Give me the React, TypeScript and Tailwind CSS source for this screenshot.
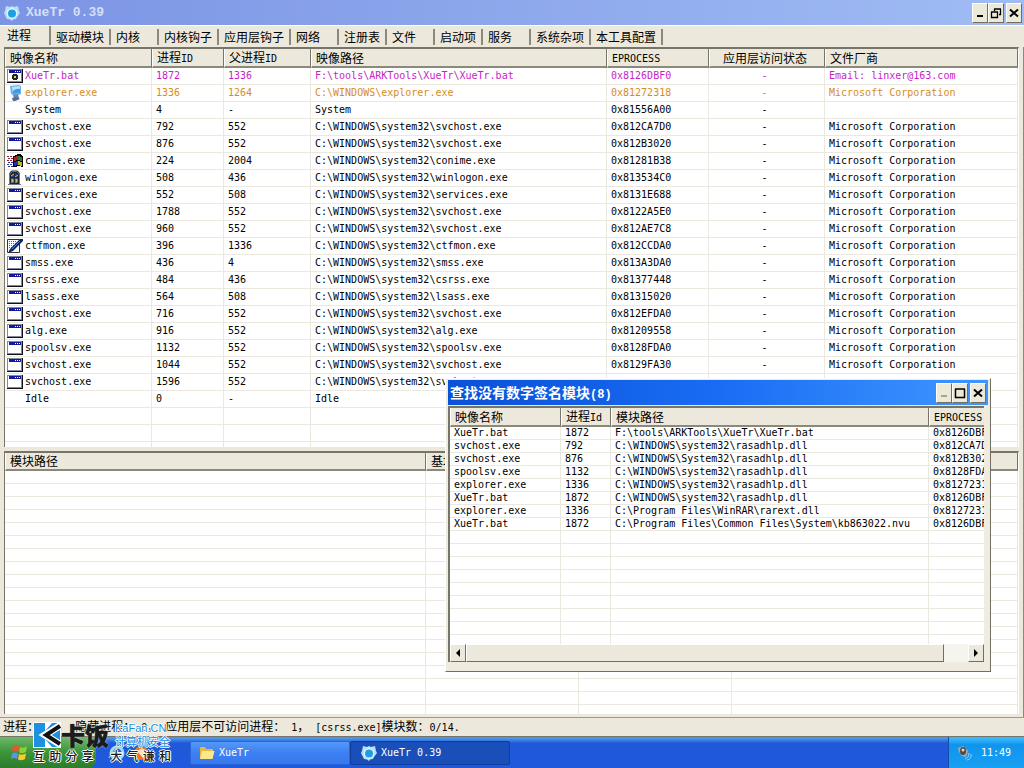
import React from 'react';

type IconName = 'console' | 'bat' | 'explorer' | 'flag' | 'winlogon' | 'ctfmon' | 'none';

interface ProcessRow {
  icon: IconName;
  name: string;
  pid: string;
  parent: string;
  path: string;
  eprocess: string;
  vendor: string;
  color?: string;
}

const MS = 'Microsoft Corporation';
const SYS = 'C:\\WINDOWS\\system32\\';

const processes: ProcessRow[] = [
  { icon: 'bat', name: 'XueTr.bat', pid: '1872', parent: '1336', path: 'F:\\tools\\ARKTools\\XueTr\\XueTr.bat', eprocess: '0x8126DBF0', vendor: 'Email: linxer@163.com', color: 'text-[#c81ec8]' },
  { icon: 'explorer', name: 'explorer.exe', pid: '1336', parent: '1264', path: 'C:\\WINDOWS\\explorer.exe', eprocess: '0x81272318', vendor: MS, color: 'text-[#d88c18]' },
  { icon: 'none', name: 'System', pid: '4', parent: '-', path: 'System', eprocess: '0x81556A00', vendor: '' },
  { icon: 'console', name: 'svchost.exe', pid: '792', parent: '552', path: SYS + 'svchost.exe', eprocess: '0x812CA7D0', vendor: MS },
  { icon: 'console', name: 'svchost.exe', pid: '876', parent: '552', path: SYS + 'svchost.exe', eprocess: '0x812B3020', vendor: MS },
  { icon: 'flag', name: 'conime.exe', pid: '224', parent: '2004', path: SYS + 'conime.exe', eprocess: '0x81281B38', vendor: MS },
  { icon: 'winlogon', name: 'winlogon.exe', pid: '508', parent: '436', path: SYS + 'winlogon.exe', eprocess: '0x813534C0', vendor: MS },
  { icon: 'console', name: 'services.exe', pid: '552', parent: '508', path: SYS + 'services.exe', eprocess: '0x8131E688', vendor: MS },
  { icon: 'console', name: 'svchost.exe', pid: '1788', parent: '552', path: SYS + 'svchost.exe', eprocess: '0x8122A5E0', vendor: MS },
  { icon: 'console', name: 'svchost.exe', pid: '960', parent: '552', path: SYS + 'svchost.exe', eprocess: '0x812AE7C8', vendor: MS },
  { icon: 'ctfmon', name: 'ctfmon.exe', pid: '396', parent: '1336', path: SYS + 'ctfmon.exe', eprocess: '0x812CCDA0', vendor: MS },
  { icon: 'console', name: 'smss.exe', pid: '436', parent: '4', path: SYS + 'smss.exe', eprocess: '0x813A3DA0', vendor: MS },
  { icon: 'console', name: 'csrss.exe', pid: '484', parent: '436', path: SYS + 'csrss.exe', eprocess: '0x81377448', vendor: MS },
  { icon: 'console', name: 'lsass.exe', pid: '564', parent: '508', path: SYS + 'lsass.exe', eprocess: '0x81315020', vendor: MS },
  { icon: 'console', name: 'svchost.exe', pid: '716', parent: '552', path: SYS + 'svchost.exe', eprocess: '0x812EFDA0', vendor: MS },
  { icon: 'console', name: 'alg.exe', pid: '916', parent: '552', path: SYS + 'alg.exe', eprocess: '0x81209558', vendor: MS },
  { icon: 'console', name: 'spoolsv.exe', pid: '1132', parent: '552', path: SYS + 'spoolsv.exe', eprocess: '0x8128FDA0', vendor: MS },
  { icon: 'console', name: 'svchost.exe', pid: '1044', parent: '552', path: SYS + 'svchost.exe', eprocess: '0x8129FA30', vendor: MS },
  { icon: 'console', name: 'svchost.exe', pid: '1596', parent: '552', path: SYS + 'svchost.exe', eprocess: '', vendor: '' },
  { icon: 'none', name: 'Idle', pid: '0', parent: '-', path: 'Idle', eprocess: '', vendor: '' },
];

const unsigned = [
  ['XueTr.bat', '1872', 'F:\\tools\\ARKTools\\XueTr\\XueTr.bat', '0x8126DBF0'],
  ['svchost.exe', '792', 'C:\\WINDOWS\\system32\\rasadhlp.dll', '0x812CA7D0'],
  ['svchost.exe', '876', 'C:\\WINDOWS\\System32\\rasadhlp.dll', '0x812B3020'],
  ['spoolsv.exe', '1132', 'C:\\WINDOWS\\system32\\rasadhlp.dll', '0x8128FDA0'],
  ['explorer.exe', '1336', 'C:\\WINDOWS\\system32\\rasadhlp.dll', '0x81272318'],
  ['XueTr.bat', '1872', 'C:\\WINDOWS\\system32\\rasadhlp.dll', '0x8126DBF0'],
  ['explorer.exe', '1336', 'C:\\Program Files\\WinRAR\\rarext.dll', '0x81272318'],
  ['XueTr.bat', '1872', 'C:\\Program Files\\Common Files\\System\\kb863022.nvu', '0x8126DBF0'],
];

const tabs = ['驱动模块', '内核', '内核钩子', '应用层钩子', '网络', '注册表', '文件', '启动项', '服务', '系统杂项', '本工具配置'];

const blank = (n: number) => Array.from({ length: n }, (_, i) => i);

// Latin runs are set in a half-width face, so two letters take the room of one ideograph.
const Mixed: React.FC<{ text: string }> = ({ text }) => (
  <>
    {text.split(/([\x20-\x7e]+)/).map((part, i) =>
      i % 2 ? (
        <span key={i} className="font-['DejaVu_Sans_Mono',monospace] text-[10px] whitespace-pre">{part}</span>
      ) : (
        part
      )
    )}
  </>
);

const RowIcon: React.FC<{ name: IconName }> = ({ name }) => {
  const svg = 'block w-4 h-4 shrink-0';
  if (name === 'none') return <span className={svg}></span>;
  if (name === 'flag') {
    return (
      <svg className={svg} viewBox="0 0 16 16" shapeRendering="crispEdges">
        <path d="M6 3h2V2h2V1h4v1h1v1h1v11h-2v-1h-4v1H6z" fill="#000" />
        <path d="M7 4h2V3h2v4H9v1H7z" fill="#b02020" />
        <path d="M11 3h2v1h2v4h-2V7h-2z" fill="#208030" />
        <path d="M7 9h2V8h2v4H9v1H7z" fill="#2030b0" />
        <path d="M11 8h2v1h2v4h-2v-1h-2z" fill="#c8b020" />
        <path d="M0 3h2v1H0zM3 3h2v1H3zM1 5h2v1H1zM4 5h2v1H4zM0 7h2v1H0zM3 7h2v1H3z" fill="#a02040" />
        <path d="M1 9h2v1H1zM4 9h2v1H4zM0 11h2v1H0zM3 11h2v1H3zM1 13h2v1H1zM4 13h2v1H4z" fill="#303090" />
      </svg>
    );
  }
  if (name === 'winlogon') {
    return (
      <svg className={svg} viewBox="0 0 16 16">
        <path d="M2 15V5q0-3 3-4.500h5q3 1.500 3 4.500v10z" fill="#20242c" />
        <path d="M4 6q0-2 3-3v4H4zM8 3q3 1 3 3v1H8zM4 8h3v5H4zM8 8h3v5H8z" fill="#283c90" />
        <path d="M4 6l3-2M8 7l3-2M5 13V9l1 3V9M9 13V9l1 3V9" stroke="#c8c060" fill="none" />
        <path d="M2.500 14V5q0-2 3-3.500h4q3 1.500 3 3.500v9" stroke="#707888" fill="none" />
        <path d="M1 14h13v1H1z" fill="#707888" />
      </svg>
    );
  }
  if (name === 'ctfmon') {
    return (
      <svg className={svg} viewBox="0 0 16 16">
        <path d="M.5 1.500h12v13H.5z" fill="#fff" stroke="#333" />
        <path d="M2 3.500h8M2 5.500h7M2 7.500h5M2 9.500h3" stroke="#666" strokeDasharray="1 1" />
        <path d="M1 15l2-4L13 1h3v2L6 13z" fill="#102468" />
        <path d="M5 11l8-8" stroke="#4c80d8" />
      </svg>
    );
  }
  if (name === 'explorer') {
    return (
      <svg className={svg} viewBox="0 0 16 16">
        <path d="M3 1l9-1 2 1v8l-6 2-4-2z" fill="#6cb0e8" />
        <path d="M5 2l8-1v7l-7 1z" fill="#b4e6fc" />
        <path d="M6 6q3-3 7-2v4l-7 1z" fill="#3c9ce4" />
        <path d="M6 10l5-1 1 4-5 1z" fill="#6c84b0" />
        <path d="M5 13l5-1 3 2-5 2H6z" fill="#586c90" />
      </svg>
    );
  }
  return (
    <svg className={svg} viewBox="0 0 16 16" shapeRendering="crispEdges">
      <path d="M0 1h16v14H0z" fill="#10101c" />
      <path d="M0 1h15v13H0z" fill="#84889c" />
      <path d="M1 2h13v11H1z" fill="#fff" />
      <path d="M2 2h12v3H2z" fill="#10189c" />
      <path d="M8 3h1v1H8zM10 3h1v1h-1zM12 3h1v1h-1z" fill="#fff" />
      {name === 'bat' && (
        <g>
          <path d="M6 6h4v1h1v4h-1v1H6v-1H5V7h1z" fill="#222" />
          <path d="M7 8h2v2H7z" fill="#c8e040" />
        </g>
      )}
    </svg>
  );
};

const GearLogo: React.FC = () => (
  <svg className="block w-4 h-4 shrink-0" viewBox="0 0 16 16">
    <path d="M2 1l4 1 2-1 2 1 4-1 1 5 1 2-3 4-1 2-3 .5L8 16l-2-1.500L3 14l-1-2-2-4 1-2z" fill="#b8e0fa" />
    <path d="M8 2.500l5 3v5.500l-5 3-5-3V5.500z" fill="#e0f6ff" />
    <circle cx="8" cy="8.500" r="4" fill="#1e9ee4" />
  </svg>
);

const CaptionButton: React.FC<{ kind: 'min' | 'restore' | 'max' | 'close'; dim?: boolean }> = ({ kind, dim }) => (
  <button
    aria-label={kind}
    className={`flex w-4 h-5 items-center justify-center bg-[#ece9d8] border border-t-white border-l-white border-r-[#716f64] border-b-[#716f64] ${dim ? 'text-[#a8a590]' : 'text-black'}`}
  >
    <svg className="block w-3 h-3 shrink-0" viewBox="0 0 12 12" fill="none" stroke="currentColor">
      {kind === 'min' && <path d="M3 9h6" strokeWidth="2" />}
      {kind === 'restore' && <path d="M4 2h7M4.500 2v2M10.500 2v5.500H9M1 5h7M1.500 5v5.500h6V5" strokeWidth="1.300" />}
      {kind === 'max' && <path d="M1 2h10M1.500 2v8.500h9V2" strokeWidth="1.500" />}
      {kind === 'close' && <path d="M2 2.500l8 7M10 2.500l-8 7" strokeWidth="2" />}
    </svg>
  </button>
);

const Th: React.FC<{ text: string; center?: boolean }> = ({ text, center }) => (
  <th
    className={`h-[18px] p-0 bg-[#ece9dc] border-l border-r border-b-2 border-l-white border-r-[#77756a] border-b-[#8b897c] font-normal leading-[15px] whitespace-nowrap overflow-hidden ${center ? 'text-center pr-1' : 'text-left pl-1'}`}
  >
    <Mixed text={text} />
  </th>
);

const cell = 'p-0 pl-1 border-r border-b border-[#ebe9df] whitespace-pre overflow-hidden';
const mono = "font-['DejaVu_Sans_Mono',monospace] text-[10px]";
const listFrame = 'bg-white border-t-2 border-l border-r border-t-[#77756a] border-l-[#77756a] border-r-white overflow-hidden';

const ProcessList: React.FC = () => (
  <div className={`${listFrame} grow-[400] basis-0 min-h-0 mx-1`}>
    <table className="w-full table-fixed border-separate border-spacing-0">
      <colgroup>
        <col className="w-[147px]" />
        <col className="w-[72px]" />
        <col className="w-[87px]" />
        <col className="w-[296px]" />
        <col className="w-[102px]" />
        <col className="w-[116px]" />
        <col />
      </colgroup>
      <thead>
        <tr>
          <Th text="映像名称" />
          <Th text="进程ID" />
          <Th text="父进程ID" />
          <Th text="映像路径" />
          <Th text="EPROCESS" />
          <Th text="应用层访问状态" center />
          <Th text="文件厂商" />
        </tr>
      </thead>
      <tbody className={`${mono} leading-4`}>
        {processes.map((p) => (
          <tr key={p.pid} className={p.color ?? 'text-black'}>
            <td className="p-0 pl-0.5 border-r border-b border-[#ebe9df]">
              <div className="flex gap-0.5 h-4">
                <RowIcon name={p.icon} />
                <span>{p.name}</span>
              </div>
            </td>
            <td className={cell}>{p.pid}</td>
            <td className={cell}>{p.parent}</td>
            <td className={cell}>{p.path}</td>
            <td className={cell}>{p.eprocess}</td>
            <td className="p-0 pr-1 border-r border-b border-[#ebe9df] text-center">-</td>
            <td className={cell}>{p.vendor}</td>
          </tr>
        ))}
        {blank(3).map((i) => (
          <tr key={i} className="h-[17px]">
            {blank(7).map((c) => (
              <td key={c} className={cell}></td>
            ))}
          </tr>
        ))}
      </tbody>
    </table>
  </div>
);

const ModuleList: React.FC = () => (
  <div className={`${listFrame} grow-[263] basis-0 min-h-0 mx-1`}>
    <table className="w-full table-fixed border-separate border-spacing-0">
      <colgroup>
        <col className="w-[421px]" />
        <col className="w-[153px]" />
        <col className="w-[153px]" />
        <col />
      </colgroup>
      <thead>
        <tr>
          <Th text="模块路径" />
          <Th text="基址" />
          <Th text="大小" />
          <Th text="文件厂商" />
        </tr>
      </thead>
      <tbody>
        {blank(20).map((i) => (
          <tr key={i} className="h-[13px]">
            {blank(4).map((c) => (
              <td key={c} className={cell}></td>
            ))}
          </tr>
        ))}
      </tbody>
    </table>
  </div>
);

const scrollButton = 'flex w-4 items-center justify-center bg-[#ece9dc] border border-t-white border-l-white border-r-[#716f64] border-b-[#716f64]';

const UnsignedDialog: React.FC = () => (
  <section
    role="dialog"
    aria-label="查找没有数字签名模块"
    className="absolute left-[445px] top-[378px] w-[546px] h-[294px] flex flex-col gap-px bg-[#efecdf] border border-l-white border-t-white border-r-[#716f64] border-b-[#716f64] px-0.5 pt-px pb-[9px]"
  >
    <div className="flex items-center h-[25px] shrink-0 px-0.5 bg-linear-to-r from-[#0a50d8] via-[#1a6cf4] to-[#3f96ff] text-white">
      <h2 className="flex-1 font-bold text-sm whitespace-nowrap">
        查找没有数字签名模块<span className="font-['Liberation_Mono',monospace] text-xs">(8)</span>
      </h2>
      <CaptionButton kind="min" dim />
      <CaptionButton kind="max" />
      <span className="w-0.5"></span>
      <CaptionButton kind="close" />
    </div>
    <div className="flex-1 min-h-0 flex flex-col mr-1 bg-white border-t-2 border-l-2 border-[#77756a]">
      <div className="flex-1 min-h-0 overflow-hidden">
        <table className="w-[557px] table-fixed border-separate border-spacing-0">
          <colgroup>
            <col className="w-[111px]" />
            <col className="w-[50px]" />
            <col className="w-[318px]" />
            <col className="w-[78px]" />
          </colgroup>
          <thead>
            <tr>
              <Th text="映像名称" />
              <Th text="进程Id" />
              <Th text="模块路径" />
              <Th text="EPROCESS" />
            </tr>
          </thead>
          <tbody className={`${mono} leading-3`}>
            {unsigned.map((row, i) => (
              <tr key={i}>
                {row.map((value, c) => (
                  <td key={c} className={cell}>{value}</td>
                ))}
              </tr>
            ))}
            {blank(10).map((i) => (
              <tr key={i} className="h-[13px]">
                {blank(4).map((c) => (
                  <td key={c} className={cell}></td>
                ))}
              </tr>
            ))}
          </tbody>
        </table>
      </div>
      <div className="flex h-[18px] shrink-0 bg-[#f6f4ee]">
        <button aria-label="向左滚动" className={scrollButton}>
          <svg className="w-2 h-2" viewBox="0 0 8 8"><path d="M6 0v8L2 4z" /></svg>
        </button>
        <div className="flex flex-1">
          <div className="w-[478px] bg-[#ece9dc] border border-t-white border-l-white border-r-[#716f64] border-b-[#716f64]"></div>
        </div>
        <button aria-label="向右滚动" className={scrollButton}>
          <svg className="w-2 h-2" viewBox="0 0 8 8"><path d="M2 0v8l4-4z" /></svg>
        </button>
      </div>
    </div>
  </section>
);

const Taskbar: React.FC = () => (
  <footer className={`flex h-[31px] shrink-0 bg-linear-to-b from-[#4a94ec] from-5% via-[#2058d8] via-20% to-[#1e5ade] text-white ${mono}`}>
    <button aria-label="开始" className="flex items-center w-24 pl-2.5 rounded-r-lg bg-linear-to-b from-[#6cb868] via-[#3c9438] to-[#2c7c2c]">
      <svg className="block w-5 h-5" viewBox="0 0 20 20">
        <path d="M3 3q3-2 6 0L8 9Q5 7 2 9z" fill="#e8582c" />
        <path d="M10 4q3 1.500 7-.5L16 9q-3 2-7 .5z" fill="#8cd038" />
        <path d="M2 10.500q3-2 6 0L7 16q-3-2-6 0z" fill="#5c94ec" />
        <path d="M9 11q3 1.500 7-.5L15 16q-3 2-7 .5z" fill="#f8cc30" />
      </svg>
    </button>
    <div className="flex items-center gap-1 w-[94px] pl-3">
      <svg className="block w-5 h-5" viewBox="0 0 20 20">
        <circle cx="9" cy="10" r="6" fill="none" stroke="#9cdcf8" strokeWidth="3" />
        <path d="M4 10h11" stroke="#c8f0ff" strokeWidth="2" />
        <path d="M1 15Q4 5 18 2" stroke="#f0d060" fill="none" />
      </svg>
      <svg className="block w-5 h-5" viewBox="0 0 20 20">
        <circle cx="9" cy="10" r="7" fill="#f07028" />
        <path d="M5 8l5-3 5 4-4 6z" fill="#fbe4c0" />
      </svg>
    </div>
    <button className="flex items-center gap-1 w-40 h-6 mt-1 pl-2 rounded-xs bg-linear-to-b from-[#5498f8] via-[#3c80f4] to-[#3878ec] border border-[#2a66d8]">
      <svg className="block w-4 h-4" viewBox="0 0 16 16">
        <path d="M1 3q0-1 1-1h4l1 2h6q1 0 1 1v8H1z" fill="#e8b840" />
        <path d="M3 6h12.500l-2 8H1z" fill="#fce888" />
      </svg>
      XueTr
    </button>
    <button className="flex items-center gap-1 w-40 h-6 mt-1 pl-2.5 rounded-xs bg-[#1a4eb8] border border-[#123c98]">
      <GearLogo />
      XueTr 0.39
    </button>
    <div className="flex items-center gap-2 ml-auto w-[76px] pl-2 border-l border-[#104cac] bg-linear-to-b from-[#38b8fc] from-5% via-[#1094ec] via-25% to-[#18a0f4]">
      <svg className="block w-4 h-4" viewBox="0 0 16 16">
        <path d="M1 3l5-2 5 5-2 6-4-1-3-4z" fill="#a8a8a4" />
        <ellipse cx="6" cy="6" rx="3" ry="4" fill="#504840" />
        <circle cx="6" cy="5" r="1.500" fill="#dcd8d0" />
        <path d="M12 8q1 4-4 6M14 9q1 5-4 6" stroke="#9cc8f8" fill="none" />
      </svg>
      <time>11:49</time>
    </div>
  </footer>
);

// Forum badge that floats over the status bar and the start button.
const KafanBadge: React.FC = () => (
  <div className="absolute left-[33px] bottom-1 w-[138px] text-[#1c1c1c]">
    <div className="flex items-center h-[26px]">
      <svg className="block w-7 h-[26px] shrink-0" viewBox="0 0 28 26">
        <path d="M0 0h28v26H0z" fill="#fff" />
        <path d="M1 1h11v8l7-8h8v24h-8l-7-8v8H1z" fill="#1e90e0" />
        <path d="M28 3L12 13l16 10" fill="none" stroke="#fff" strokeWidth="7" />
        <path d="M27 4L13 13l14 9" fill="none" stroke="#111" strokeWidth="4" />
      </svg>
      <span className="font-black text-2xl leading-6 whitespace-nowrap text-shadow-[0_0_1px_#1c1c1c,0_0_2px_#fff]">卡饭</span>
      <div className="flex flex-col pl-1.5 text-[11px] leading-[13px] text-[#168ee0] whitespace-nowrap text-shadow-[1px_0_0_#fff,-1px_0_0_#fff,0_1px_0_#fff,0_-1px_0_#fff]">
        <span className="font-['Liberation_Sans',sans-serif]">KaFan.CN</span>
        <span>计算机安全</span>
      </div>
    </div>
    <div className="flex justify-between h-4 text-xs leading-4 font-medium text-shadow-[1px_0_0_#fff,-1px_0_0_#fff,0_1px_0_#fff,0_-1px_0_#fff]">
      {'互助分享'.split('').map((c) => <span key={c}>{c}</span>)}
      <span className="w-2"></span>
      {'大气谦和'.split('').map((c) => <span key={c}>{c}</span>)}
    </div>
  </div>
);

export default function App() {
  return (
    <div className="relative flex flex-col w-full h-screen overflow-hidden bg-[#ece9dc] font-['Noto_Sans_CJK_SC',sans-serif] text-xs text-black">
      <header className="flex items-center h-[25px] shrink-0 pl-1 pr-0.5 gap-1.5 bg-linear-to-r from-[#7c94e4] to-[#a0bcf4]">
        <GearLogo />
        <h1 className="flex-1 font-['Liberation_Mono',monospace] font-bold text-[13px] text-[#d4dffa]">XueTr 0.39</h1>
        <div className="flex">
          <CaptionButton kind="min" />
          <CaptionButton kind="restore" />
          <span className="w-0.5"></span>
          <CaptionButton kind="close" />
        </div>
      </header>

      <nav role="tablist" className="flex items-end h-[22px] shrink-0 pl-[3px] pb-0.5 border-t border-white">
        <button role="tab" aria-selected="true" className="w-12 h-[19px] pl-1 pb-0.5 text-left leading-4 border-r-2 border-[#8b897c]">进程</button>
        {tabs.map((t) => (
          <button key={t} role="tab" aria-selected="false" className="min-w-12 h-4 px-[5px] text-left leading-4 whitespace-nowrap border-r-2 border-[#8b897c]">{t}</button>
        ))}
      </nav>

      <main className="flex flex-col flex-1 min-h-0 gap-1 pb-[3px] border-r border-[#8b897c]">
        <ProcessList />
        <ModuleList />
      </main>

      <div role="status" className="h-5 shrink-0 pl-[3px] leading-4 whitespace-pre border-t border-b border-t-[#9c9a8c] border-b-[#77756a]">
        <Mixed text="进程： 20， 隐藏进程： 0， 应用层不可访问进程： 1， [csrss.exe]模块数：0/14." />
      </div>

      <Taskbar />
      <UnsignedDialog />
      <KafanBadge />
    </div>
  );
}
